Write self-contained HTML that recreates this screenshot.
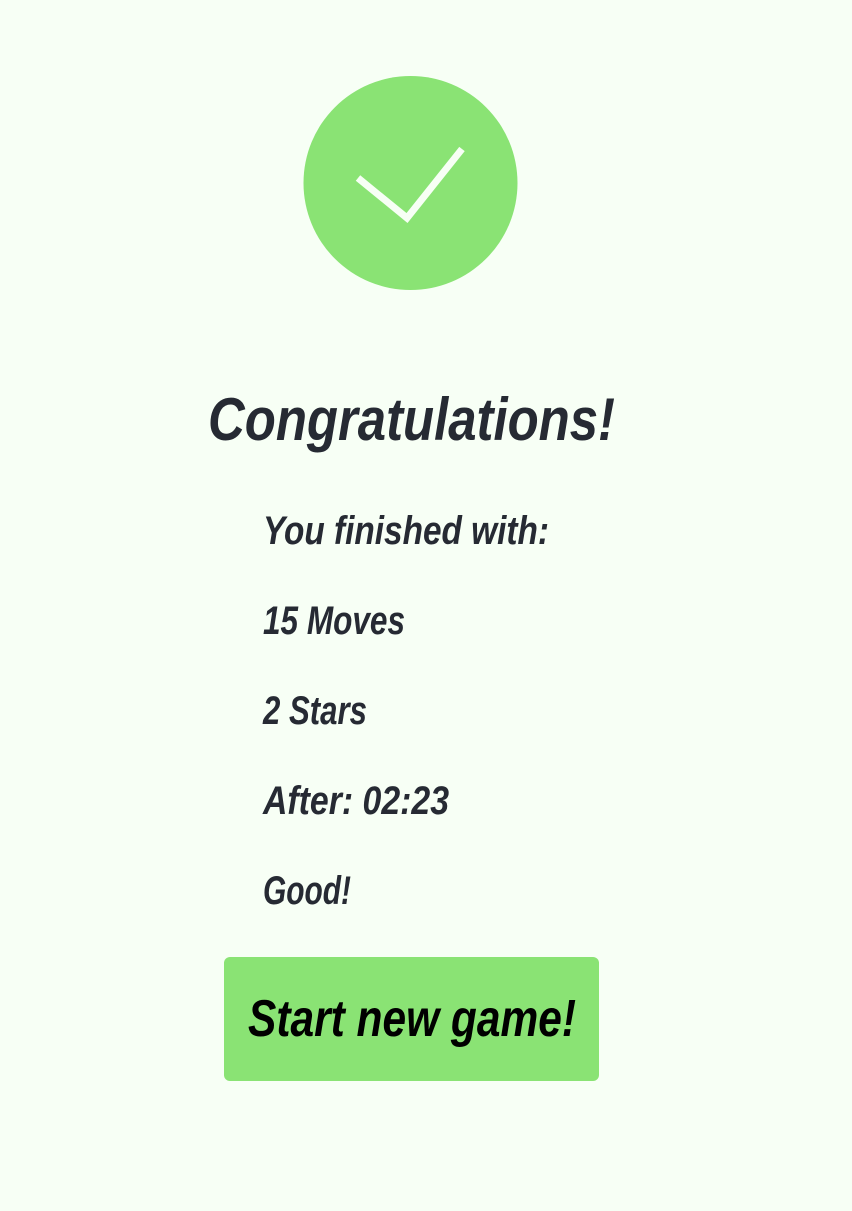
<!DOCTYPE html>
<html><head><meta charset="utf-8"><style>
html,body{margin:0;padding:0;background:#f7fff5;}
svg{display:block}
text{font-family:"Liberation Sans Narrow","Liberation Sans",sans-serif;font-weight:bold;font-style:italic;}
</style></head><body>
<svg width="852" height="1211" viewBox="0 0 852 1211" xmlns="http://www.w3.org/2000/svg">
<rect width="852" height="1211" fill="#f7fff5"/>
<circle cx="410.5" cy="183" r="107" fill="#8ae374"/>
<polyline points="358,178 407,218 462,149" fill="none" stroke="#f7fff5" stroke-width="7"/>
<text x="208" y="440" font-size="60" fill="#262a33" textLength="407" lengthAdjust="spacingAndGlyphs">Congratulations!</text>
<g font-size="40" fill="#262a33">
<text x="263" y="544" textLength="286" lengthAdjust="spacingAndGlyphs">You finished with:</text>
<text x="263" y="634" textLength="142" lengthAdjust="spacingAndGlyphs">15 Moves</text>
<text x="263" y="724" textLength="104" lengthAdjust="spacingAndGlyphs">2 Stars</text>
<text x="263" y="814" textLength="186" lengthAdjust="spacingAndGlyphs">After: 02:23</text>
<text x="263" y="904" textLength="88" lengthAdjust="spacingAndGlyphs">Good!</text>
</g>
<rect x="224" y="957" width="375" height="124" rx="6" fill="#8ae374"/>
<text x="248" y="1036" font-size="52" fill="#000" textLength="328" lengthAdjust="spacingAndGlyphs">Start new game!</text>
</svg>
</body></html>
